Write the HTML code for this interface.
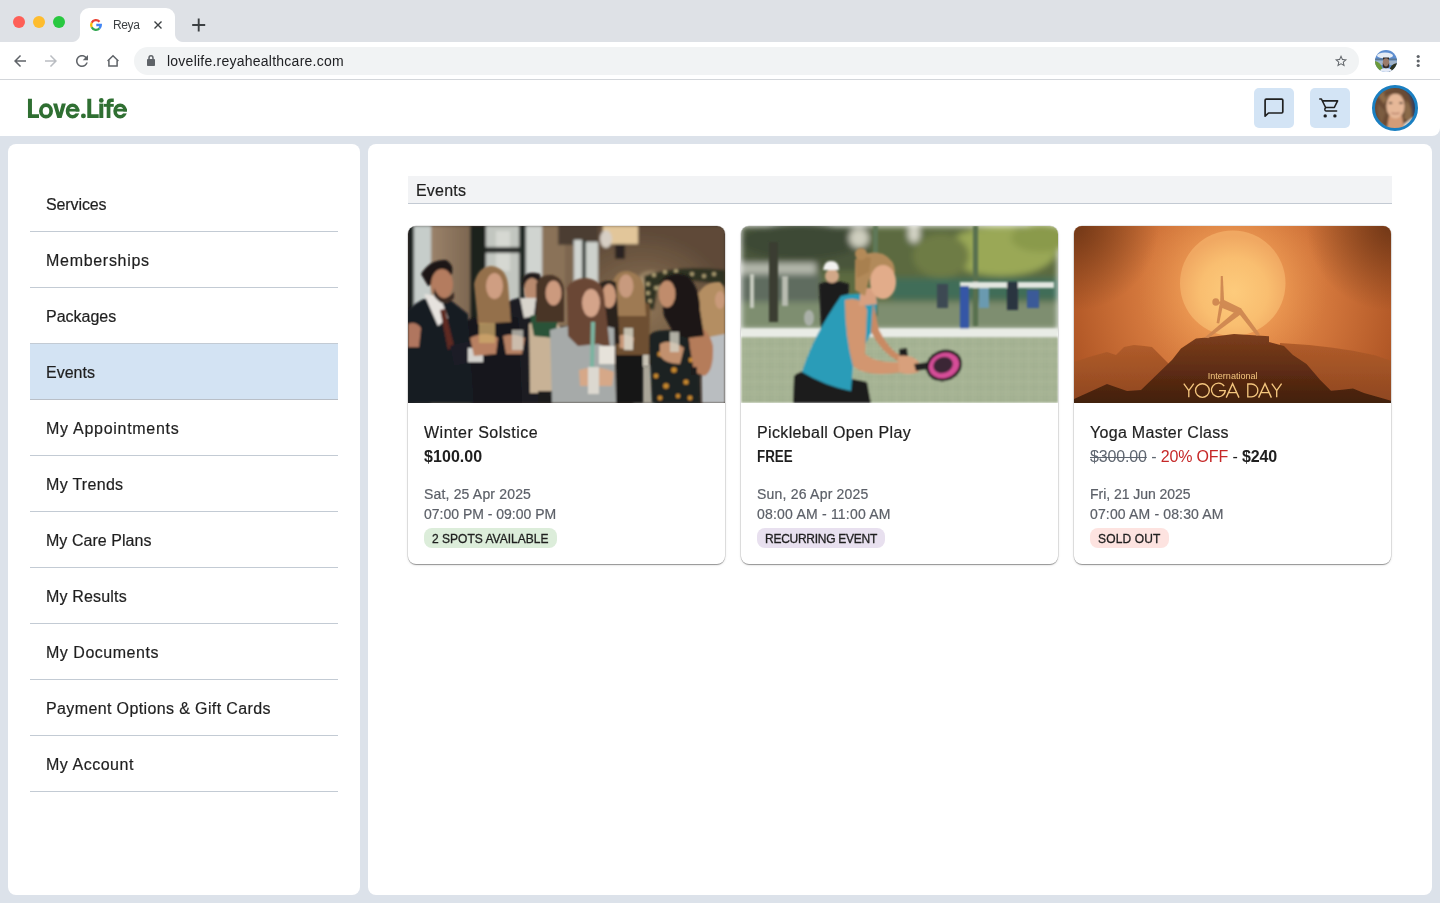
<!DOCTYPE html>
<html><head><meta charset="utf-8"><title>Reya</title>
<style>
*{box-sizing:border-box;margin:0;padding:0}
html,body{width:1440px;height:903px;overflow:hidden}
body{position:relative;background:#dce2ea;font-family:"Liberation Sans",sans-serif;color:#1f1f1f}
.abs{position:absolute}
.abs,.item,.card{will-change:transform}
.item,#evhead,.ttl,.date{-webkit-text-stroke:0.2px currentColor}
#logo{left:27.5px;top:92px;font-size:27.5px;font-weight:bold;color:#2e7031;letter-spacing:-2.6px;line-height:34px;white-space:nowrap}
/* chrome */
#tabstrip{left:0;top:0;width:1440px;height:42px;background:#dee1e6}
.dot{position:absolute;width:12px;height:12px;border-radius:50%;top:15.5px}
#tab{left:80px;top:8px;width:95px;height:34px;background:#fff;border-radius:9px 9px 0 0}
#tab:before,#tab:after{content:"";position:absolute;bottom:0;width:8px;height:8px;background:radial-gradient(circle at 0 0,transparent 8px,#fff 8.5px)}
#tab:before{left:-8px;background:radial-gradient(circle at 0 0,#dee1e6 7.5px,#fff 8.5px)}
#tab:after{right:-8px;background:radial-gradient(circle at 100% 0,#dee1e6 7.5px,#fff 8.5px)}
#toolbar{left:0;top:42px;width:1440px;height:38px;background:#fff;border-bottom:1px solid #d3d6da}
#omni{left:134px;top:5px;width:1225px;height:28px;border-radius:14px;background:#f1f3f4}
#url{left:167px;top:51px;font-size:14px;color:#202124;line-height:20px}
#tabtitle{left:113px;top:17px;font-size:12px;line-height:16px;color:#3c4043;letter-spacing:-0.4px}
/* app header */
#header{left:0;top:80px;width:1440px;height:56px;background:#fff;border-bottom-right-radius:8px}
.hbtn{position:absolute;top:88px;width:40px;height:40px;border-radius:5px;background:#d3e4f5}
#avatar{left:1372px;top:85px;width:46px;height:46px;border-radius:50%;border:3px solid #1a7dc0;overflow:hidden;background:#6b4a30}
/* sidebar */
#side{left:8px;top:144px;width:352px;height:751px;background:#fff;border-radius:8px}
.item{position:absolute;left:30px;width:308px;height:56px;border-bottom:1px solid #c3cbd4;font-size:16px;color:#1f1f1f;padding-left:16px;padding-top:1px;line-height:55px}
.item.sel{background:#d3e3f3;border-bottom-color:#b9bfc7}
/* main */
#main{left:368px;top:144px;width:1064px;height:751px;background:#fff;border-radius:8px}
#evhead{left:408px;top:176px;width:984px;height:28px;background:#f2f3f5;border-bottom:1px solid #c3cad3;font-size:16px;line-height:29px;padding-left:8px;color:#1f1f1f}
.card{position:absolute;top:226px;width:317px;height:338px;background:#fff;border-radius:8px;overflow:hidden;box-shadow:0 0 0 0.6px rgba(0,0,0,.16),0 2px 1px -1px rgba(0,0,0,.2),0 1px 1px 0 rgba(0,0,0,.14),0 1px 3px 0 rgba(0,0,0,.12)}
.img{position:absolute;left:0;top:0;width:317px;height:177px;overflow:hidden}
.ttl{position:absolute;left:16px;top:195px;font-size:16px;line-height:24px;color:#1f1f1f}
.price{position:absolute;left:16px;top:219px;font-size:16px;line-height:24px;font-weight:bold;color:#1f1f1f}
.date{position:absolute;left:16px;top:258px;font-size:14px;line-height:20px;color:#5c6068}
.chip{position:absolute;left:16px;top:302px;height:20px;border-radius:8px;font-size:12px;line-height:22px;padding:0 8px;color:#1f1f1f;-webkit-text-stroke:0.3px #1f1f1f}
</style><style id="lsfit">#urlt{letter-spacing:0.238px}#si0{letter-spacing:-0.114px}#si1{letter-spacing:0.700px}#si2{letter-spacing:0.000px}#si3{letter-spacing:0.000px}#si4{letter-spacing:0.714px}#si5{letter-spacing:0.300px}#si6{letter-spacing:0.042px}#si7{letter-spacing:0.167px}#si8{letter-spacing:0.518px}#si9{letter-spacing:0.378px}#si10{letter-spacing:0.522px}#evh{letter-spacing:0.200px}#t1{letter-spacing:0.500px}#p1{letter-spacing:0.067px}#d1{letter-spacing:0.173px}#h1{letter-spacing:-0.006px}#c1{letter-spacing:0.016px}#t2{letter-spacing:0.363px}#p2{display:inline-block;transform:scaleX(0.835);transform-origin:0 0}#d2{letter-spacing:0.213px}#h2{letter-spacing:0.211px}#c2{letter-spacing:-0.264px}#t3{letter-spacing:0.300px}#p3{letter-spacing:-0.143px}#d3{letter-spacing:-0.040px}#h3{letter-spacing:0.150px}#c3{letter-spacing:0.157px}</style></head>
<body>
<div id="tabstrip" class="abs">
  <div class="dot" style="left:13px;background:#fe5f57"></div>
  <div class="dot" style="left:33px;background:#febc2e"></div>
  <div class="dot" style="left:53px;background:#28c840"></div>
</div>
<div id="tab" class="abs"></div>
<div id="toolbar" class="abs"><div id="omni" class="abs"></div></div>
<div id="url" class="abs"><span id="urlt">lovelife.reyahealthcare.com</span></div>
<div id="tabtitle" class="abs">Reya</div>
<svg class="abs" style="left:0;top:0" width="1440" height="80" viewBox="0 0 1440 80">
  <!-- google G -->
  <g transform="translate(96,25)" fill="none" stroke-width="2.3">
    <path d="M3.5,-3.3 A4.8,4.8 0 0 0 -4.3,-2.2" stroke="#ea4335"/>
    <path d="M-4.3,-2.2 A4.8,4.8 0 0 0 -4.3,2.2" stroke="#fbbc05"/>
    <path d="M-4.3,2.2 A4.8,4.8 0 0 0 3.5,3.3" stroke="#34a853"/>
    <path d="M3.5,3.3 A4.8,4.8 0 0 0 4.8,0 H0.3" stroke="#4285f4"/>
  </g>
  <!-- tab close -->
  <path d="M154.5,21.5 L161.5,28.5 M161.5,21.5 L154.5,28.5" stroke="#3c4043" stroke-width="1.4"/>
  <!-- new tab + -->
  <path d="M198.7,18.5 V31.5 M192.2,25 H205.2" stroke="#3c4043" stroke-width="1.9"/>
  <!-- back -->
  <g transform="translate(11,52) scale(0.75)"><path fill="#5f6368" d="M20 11H7.83l5.59-5.59L12 4l-8 8 8 8 1.41-1.41L7.83 13H20v-2z"/></g>
  <g transform="translate(42,52) scale(0.75)"><path fill="#babdc2" d="M12 4l-1.41 1.41L16.17 11H4v2h12.17l-5.58 5.59L12 20l8-8z"/></g>
  <g transform="translate(73,52) scale(0.75)"><path fill="#5f6368" d="M17.65 6.35C16.2 4.9 14.21 4 12 4c-4.42 0-7.99 3.58-7.99 8s3.57 8 7.99 8c3.73 0 6.84-2.55 7.730-6h-2.08c-.82 2.33-3.04 4-5.65 4-3.310 0-6-2.69-6-6s2.69-6 6-6c1.66 0 3.14.69 4.22 1.78L13 11h7V4l-2.35 2.35z"/></g>
  <path d="M107.6,61 L113,55.8 L118.4,61 M108.9,59.8 V66.1 H117.1 V59.8" fill="none" stroke="#5f6368" stroke-width="1.5" stroke-linejoin="miter"/>
  <!-- lock -->
  <rect x="147" y="59" width="8" height="7" rx="0.8" fill="#5f6368"/>
  <path d="M149,59.5 V58 A2,2.2 0 0 1 153,58 V59.5" fill="none" stroke="#5f6368" stroke-width="1.5"/>
  <!-- star -->
  <g transform="translate(1333.7,53.8) scale(0.61)"><path fill="#5f6368" d="M22 9.24l-7.19-.62L12 2 9.19 8.63 2 9.24l5.46 4.73L5.82 21 12 17.27 18.18 21l-1.63-7.03L22 9.24zM12 15.4l-3.76 2.27 1-4.28-3.32-2.88 4.38-.38L12 6.1l1.71 4.04 4.38.38-3.32 2.88 1 4.28L12 15.4z"/></g>
  <!-- profile -->
  <defs><clipPath id="pc"><circle cx="1386" cy="61" r="11"/></clipPath></defs>
  <g clip-path="url(#pc)">
    <rect x="1375" y="50" width="22" height="22" fill="#5e8ed0"/>
    <ellipse cx="1385" cy="55.5" rx="8" ry="3" fill="#e6ecf4"/>
    <rect x="1375" y="58.5" width="22" height="2" fill="#5a7896"/>
    <rect x="1375" y="60.5" width="22" height="4.5" fill="#9fb4cc"/>
    <path d="M1375,61 Q1381,62 1383,70 L1375,72 Z" fill="#6c9a3a"/>
    <path d="M1397,63 Q1390,64 1389,72 L1397,72 Z" fill="#2e3422"/>
    <rect x="1383" y="57.5" width="6" height="2.2" fill="#2a2420"/>
    <ellipse cx="1386" cy="62.5" rx="3.2" ry="4.2" fill="#9a7a6a"/>
    <path d="M1382.8,63 Q1386,70 1389.2,63 L1389.2,67 Q1386,70 1382.8,67 Z" fill="#3a2e28"/>
    <path d="M1379,72 Q1381,67.5 1386,68.5 Q1391,67.5 1393,72 Z" fill="#e4eaf6"/>
  </g>
  <!-- menu -->
  <circle cx="1418.2" cy="56.5" r="1.6" fill="#5f6368"/>
  <circle cx="1418.2" cy="61" r="1.6" fill="#5f6368"/>
  <circle cx="1418.2" cy="65.5" r="1.6" fill="#5f6368"/>
</svg>

<div id="header" class="abs"></div>
<svg class="abs" style="left:0;top:80px" width="160" height="56" viewBox="0 80 160 56"><g fill="#2f6f32">
<path d="M27.96,98.8 H31.95 V114.2 H39 V118 H27.96 Z"/>
<ellipse cx="46" cy="110.95" rx="5.15" ry="5.75" fill="none" stroke="#2f6f32" stroke-width="3.7"/>
<path d="M53,103.6 H57.1 L59.45,112.6 L61.8,103.6 H65.9 L61.6,118 H57.3 Z"/>
<g id="lge"><ellipse cx="72.55" cy="110.95" rx="5.05" ry="5.75" fill="none" stroke="#2f6f32" stroke-width="3.6"/>
<rect x="74.6" y="111.5" width="6" height="1.9" fill="#fff"/>
<rect x="67.5" y="108.8" width="11.9" height="2.7"/></g>
<circle cx="83.4" cy="115.9" r="2.45"/>
<path d="M87.3,98.8 H91.25 V114.2 H98.75 V118 H87.3 Z"/>
<rect x="99.3" y="103.6" width="4" height="14.4"/>
<circle cx="101.3" cy="100.4" r="2.35"/>
<path d="M106.7,118 V102.6 Q106.7,98.6 111.2,98.6 H113.75 V101.9 H111.8 Q110.4,101.9 110.4,103.3 V118 Z"/>
<rect x="103.75" y="103.9" width="10" height="2.9"/>
<use href="#lge" transform="translate(47.6 0)"/>
</g></svg>
<div class="hbtn" style="left:1254px"></div>
<div class="hbtn" style="left:1310px"></div>
<svg class="abs" style="left:1240px;top:80px" width="200" height="56" viewBox="1240 80 200 56">
  <path d="M1265.1,116.2 V100.3 Q1265.1,99.1 1266.3,99.1 H1281.6 Q1282.8,99.1 1282.8,100.3 V111.8 Q1282.8,113 1281.6,113 H1268.5 Z" fill="none" stroke="#1f1f1f" stroke-width="1.7" stroke-linejoin="round"/>
  <path d="M1319.8,99 H1321.4 L1325.6,107.5 Q1324.2,109.5 1325.0,110.3 Q1325.4,111 1326.4,111 H1336.6" fill="none" stroke="#1f1f1f" stroke-width="1.6" stroke-linecap="round" stroke-linejoin="round"/>
  <path d="M1322.4,100.9 H1337.6 L1334.3,107.5 H1325.6" fill="none" stroke="#1f1f1f" stroke-width="1.6" stroke-linejoin="round"/>
  <circle cx="1325.2" cy="115.9" r="1.7" fill="#1f1f1f"/>
  <circle cx="1334.9" cy="115.9" r="1.7" fill="#1f1f1f"/>
</svg>
<svg class="abs" style="left:1370px;top:83px" width="50" height="50" viewBox="1370 83 50 50">
<defs><clipPath id="avc"><circle cx="1395" cy="108" r="21"/></clipPath><filter id="avb"><feGaussianBlur stdDeviation="0.9"/></filter></defs>
<g clip-path="url(#avc)"><g filter="url(#avb)">
<rect x="1370" y="83" width="50" height="50" fill="#4e3c2e"/>
<path d="M1402,86 Q1420,88 1418,122 L1406,120 L1404,96 Z" fill="#34405a"/>
<path d="M1373,112 Q1372,89 1393,87 Q1411,88 1412,106 L1414,124 L1376,128 Z" fill="#6a4c34"/>
<path d="M1378,96 Q1386,86 1400,88 Q1390,92 1384,104 Z" fill="#8e6c4a"/>
<path d="M1406,100 Q1414,108 1410,122 L1404,118 Z" fill="#8a6a4a"/>
<path d="M1378,104 Q1376,116 1382,124 L1386,112 Z" fill="#7c5c40"/>
<path d="M1374,118 Q1380,124 1388,130 L1386,134 L1372,134 Z" fill="#ebe6e0"/>
<path d="M1404,124 Q1410,120 1413,117 L1416,134 L1402,134 Z" fill="#e4ddd6"/>
<path d="M1389,116 L1402,116 L1405,134 L1386,134 Z" fill="#d49c78"/>
<ellipse cx="1395.5" cy="106" rx="9.2" ry="12.5" fill="#e6b898"/>
<path d="M1385,98 Q1392,90 1405,96 L1406,90 Q1394,85 1384,92 Z" fill="#6a4c34"/>
<ellipse cx="1390.6" cy="103" rx="1.8" ry="0.9" fill="#4a3a32"/>
<ellipse cx="1401" cy="103" rx="1.8" ry="0.9" fill="#4a3a32"/>
<path d="M1391.5,113 Q1395.5,114.5 1399.5,113" stroke="#a86a5a" stroke-width="1.2" fill="none"/>
</g></g>
<circle cx="1395" cy="108" r="21.5" fill="none" stroke="#1a7fc1" stroke-width="3"/>
</svg>

<div id="side" class="abs"></div>
<div class="item" style="top:176px"><span id="si0">Services</span></div>
<div class="item" style="top:232px"><span id="si1">Memberships</span></div>
<div class="item" style="top:288px"><span id="si2">Packages</span></div>
<div class="item sel" style="top:344px"><span id="si3">Events</span></div>
<div class="item" style="top:400px"><span id="si4">My Appointments</span></div>
<div class="item" style="top:456px"><span id="si5">My Trends</span></div>
<div class="item" style="top:512px"><span id="si6">My Care Plans</span></div>
<div class="item" style="top:568px"><span id="si7">My Results</span></div>
<div class="item" style="top:624px"><span id="si8">My Documents</span></div>
<div class="item" style="top:680px"><span id="si9">Payment Options &amp; Gift Cards</span></div>
<div class="item" style="top:736px"><span id="si10">My Account</span></div>

<div id="main" class="abs"></div>
<div id="evhead" class="abs"><span id="evh">Events</span></div>

<div class="card" style="left:408px">
  <div class="img"><!--IMG1-->
<svg width="317" height="177" viewBox="0 0 317 177" style="position:absolute;left:0;top:0">
<defs>
<filter id="bl1" x="-5%" y="-5%" width="110%" height="110%"><feGaussianBlur stdDeviation="0.8"/></filter><filter id="bl2" x="-5%" y="-5%" width="110%" height="110%"><feGaussianBlur stdDeviation="1.6"/></filter>
<radialGradient id="glow1" cx="0.5" cy="0.5" r="0.5"><stop offset="0" stop-color="#f6e2b0" stop-opacity="1"/><stop offset="1" stop-color="#f3dcae" stop-opacity="0"/></radialGradient>
<radialGradient id="wallg" cx="0.35" cy="0.75" r="0.7"><stop offset="0" stop-color="#8e7456"/><stop offset="1" stop-color="#5e4a38"/></radialGradient>
<linearGradient id="pil" x1="0" y1="0" x2="1" y2="0"><stop offset="0" stop-color="#9a826a"/><stop offset="1" stop-color="#7c6650"/></linearGradient>
</defs>
<g filter="url(#bl2)">
<rect x="-5" y="-5" width="327" height="187" fill="#3a2e26"/>
<!-- left structures -->
<rect x="0" y="0" width="7" height="177" fill="#1d2422"/>
<rect x="6" y="0" width="17" height="130" fill="#c6cdca"/>
<rect x="23" y="0" width="40" height="177" fill="url(#pil)"/>
<rect x="62" y="0" width="16" height="120" fill="#1b201d"/>
<rect x="78" y="0" width="34" height="90" fill="#c2c6c0"/>
<rect x="88" y="5" width="14" height="40" fill="#d6d8d2"/>
<rect x="78" y="21" width="36" height="6" fill="#262c28"/>
<rect x="111" y="0" width="7" height="90" fill="#222a26"/>
<rect x="118" y="0" width="16" height="80" fill="#d0d4d0"/>
<rect x="134" y="0" width="32" height="100" fill="#8a7258"/>
<!-- ceiling beam & window2 -->
<rect x="150" y="0" width="44" height="19" fill="#4c3e32"/>
<rect x="157" y="19" width="9" height="45" fill="#7d6650"/>
<rect x="166" y="14" width="9" height="46" fill="#d0d4d0"/>
<rect x="174" y="14" width="4" height="46" fill="#27302a"/>
<rect x="178" y="16" width="12" height="44" fill="#cdd1cc"/>
<!-- right wall -->
<rect x="190" y="0" width="127" height="110" fill="url(#wallg)"/>
<rect x="195" y="0" width="35" height="18" fill="#e2c69a"/>
<ellipse cx="198" cy="13" rx="6" ry="9" fill="#d6cec4"/>
<rect x="207" y="18" width="10" height="15" fill="#2a2420"/>
<ellipse cx="243" cy="56" rx="16" ry="13" fill="url(#glow1)"/>
<path d="M236,50 Q270,38 317,44 L317,60 Q276,50 250,60 L246,84 L236,82 Z" fill="#2e3022"/>
<g fill="#f2dca0"><circle cx="240" cy="58" r="1.6"/><circle cx="246" cy="49" r="1.6"/><circle cx="257" cy="46" r="1.5"/><circle cx="268" cy="45" r="1.5"/><circle cx="284" cy="48" r="1.5"/><circle cx="296" cy="50" r="1.5"/><circle cx="306" cy="48" r="1.5"/><circle cx="240" cy="67" r="1.6"/><circle cx="242" cy="75" r="1.5"/><circle cx="248" cy="62" r="1.4"/></g>
<rect x="226" y="140" width="20" height="37" fill="#aaa598"/>
</g>
<g filter="url(#bl1)">
<!-- right gray sleeve person -->
<path d="M300,88 Q312,80 317,84 L317,177 L294,177 Q292,130 300,88 Z" fill="#b9bdc0"/>
<!-- blonde right -->
<path d="M289,70 Q296,55 312,56 Q317,60 317,70 L317,108 L296,112 Q288,95 289,70 Z" fill="#b48e62"/>
<ellipse cx="312" cy="74" rx="5" ry="9" fill="#c99a7a"/>
<!-- woman 8 -->
<path d="M241,110 Q244,104 262,104 L290,108 L292,177 L244,177 Z" fill="#1e2420"/>
<g fill="#c8882e"><circle cx="252" cy="128" r="2.6"/><circle cx="266" cy="144" r="2.8"/><circle cx="258" cy="160" r="2.8"/><circle cx="278" cy="156" r="2.6"/><circle cx="248" cy="150" r="2.4"/><circle cx="283" cy="134" r="2.4"/><circle cx="282" cy="172" r="2.4"/><circle cx="252" cy="172" r="2.4"/><circle cx="270" cy="170" r="2.2"/><circle cx="262" cy="118" r="2.2"/></g>
<path d="M279,96 Q300,98 305,120 Q306,146 296,150 L286,146 L282,122 Z" fill="#b57c5a"/>
<path d="M252,57 Q262,44 280,50 Q292,62 292,84 L296,110 L280,112 L266,108 L256,90 Z" fill="#1c1816"/>
<ellipse cx="259" cy="68" rx="8.5" ry="13.5" fill="#c08c6c"/>
<path d="M252,118 Q262,112 276,122 L272,138 Q258,138 252,130 Z" fill="#c2906e"/>
<rect x="232" y="106" width="9" height="34" fill="#e0dccc" opacity="0.85"/>
<rect x="262" y="106" width="9" height="20" fill="#d4d2c4" opacity="0.8"/>
<rect x="283" y="141" width="6" height="8" fill="#1a1a1a"/>
<!-- woman 7 -->
<rect x="208" y="127" width="27" height="50" fill="#151515"/>
<path d="M206,76 Q222,70 242,78 L241,129 L208,129 Z" fill="#6e5030"/>
<path d="M204,58 Q208,44 220,45 Q234,48 236,62 L238,90 L204,90 Z" fill="#9e7a52"/>
<ellipse cx="218" cy="60" rx="7.5" ry="11.5" fill="#c89a7e"/>
<path d="M210,110 Q218,106 226,112 L224,124 L212,122 Z" fill="#c89878"/>
<rect x="216" y="102" width="9" height="22" fill="#d8d8cc" opacity="0.8"/>
<!-- woman 6 -->
<path d="M189,60 Q196,52 208,56 L212,118 L188,118 Z" fill="#2c221e"/>
<ellipse cx="201" cy="70" rx="7" ry="12" fill="#cc9a7c"/>
<!-- man 3 -->
<path d="M100,76 Q112,68 130,74 L134,177 L98,177 Z" fill="#1a1d24"/>
<path d="M114,52 Q120,44 132,48 L134,60 L115,62 Z" fill="#221e1a"/>
<ellipse cx="124" cy="64" rx="8" ry="12" fill="#b88a6e"/>
<path d="M112,72 L128,72 L126,90 L116,92 Z" fill="#d8d4cc"/>
<!-- woman 4 -->
<path d="M121,98 Q132,90 146,96 L152,100 L150,167 L122,167 Z" fill="#c8b296"/>
<path d="M122,90 Q136,84 150,92 L147,112 L126,110 Z" fill="#2c5238"/>
<rect x="130" y="165" width="22" height="12" fill="#1a1a1a"/>
<path d="M128,58 Q132,48 144,49 Q156,52 156,66 L156,96 L128,96 Z" fill="#4a3428"/>
<ellipse cx="145.5" cy="67" rx="8" ry="12.5" fill="#cc9a7e"/>
<!-- woman 2 -->
<path d="M56,96 Q80,84 110,92 L114,177 L56,177 Z" fill="#16151a"/>
<path d="M66,58 Q70,40 84,40 Q98,42 100,58 L103,96 L70,98 Z" fill="#94704c"/>
<ellipse cx="86.5" cy="60" rx="8.5" ry="13" fill="#cf9e82"/>
<path d="M95,110 Q106,106 117,112 L114,128 L98,128 Z" fill="#b58064"/>
<rect x="104" y="104" width="11" height="20" fill="#d4d0c4" opacity="0.75"/>
<!-- man 1 -->
<path d="M0,84 Q18,66 40,72 L60,88 L66,177 L0,177 Z" fill="#171a22"/>
<path d="M16,68 L32,70 L40,92 L30,100 Z" fill="#e6e2de"/>
<path d="M32,84 L37,83 L46,120 L40,124 Z" fill="#5e2a22"/>
<path d="M42,120 Q62,112 76,118 L76,134 L46,140 Z" fill="#1a1c26"/>
<rect x="60" y="122" width="15" height="14" fill="#d4d2ce"/>
<path d="M62,112 Q78,104 90,112 L88,128 L66,130 Z" fill="#b88062"/>
<rect x="71" y="97" width="16" height="20" fill="#caa66a" opacity="0.8"/>
<path d="M13,48 Q22,33 38,34 Q46,38 44,48 L40,52 L20,60 Z" fill="#1e1916"/>
<ellipse cx="34" cy="58" rx="11" ry="15" fill="#b47c5e"/>
<path d="M26,62 Q34,80 46,66 L46,72 Q36,84 26,70 Z" fill="#3a2a22"/>
<path d="M0,98 Q8,95 13,102 L11,121 L0,121 Z" fill="#b0765e"/>
<!-- woman 5 center -->
<path d="M142,104 Q172,94 206,102 L208,177 L144,177 Z" fill="#a6aaa9"/>
<path d="M159,62 Q164,52 178,52 Q194,54 196,68 L202,122 L190,118 L170,120 L160,110 Z" fill="#6a4634"/>
<ellipse cx="183" cy="77" rx="9" ry="14" fill="#d4a48a"/>
<path d="M183,96 L187,96 L186,142 L182,142 Z" fill="#7ab4a0"/>
<rect x="191" y="120" width="16" height="18" fill="#e6e2da"/>
<path d="M171,144 Q188,138 206,146 L204,160 L172,160 Z" fill="#d6a888"/>
<rect x="180" y="141" width="11" height="27" fill="#dcd8d0"/>
</g>
</svg>
<!--/IMG1--></div>
  <div class="ttl"><span id="t1">Winter Solstice</span></div>
  <div class="price"><span id="p1">$100.00</span></div>
  <div class="date"><span id="d1">Sat, 25 Apr 2025</span><br><span id="h1">07:00 PM - 09:00 PM</span></div>
  <div class="chip" style="background:#dcedda"><span id="c1">2 SPOTS AVAILABLE</span></div>
</div>
<div class="card" style="left:741px">
  <div class="img"><!--IMG2-->
<svg width="317" height="177" viewBox="0 0 317 177" style="position:absolute;left:0;top:0">
<defs>
<filter id="pb1" x="-5%" y="-5%" width="110%" height="110%"><feGaussianBlur stdDeviation="0.8"/></filter>
<filter id="pb3" x="-10%" y="-10%" width="120%" height="120%"><feGaussianBlur stdDeviation="3"/></filter>
<pattern id="mesh" width="3.3" height="3.3" patternUnits="userSpaceOnUse"><rect width="3.3" height="3.3" fill="#8a9a78"/><path d="M0,0.6 H3.3 M0.6,0 V3.3" stroke="#b8c4a6" stroke-width="1.1"/></pattern>
</defs>
<g filter="url(#pb3)">
<rect x="0" y="0" width="317" height="100" fill="#5c6a40"/>
<rect x="0" y="0" width="130" height="45" fill="#48553a"/>
<ellipse cx="60" cy="15" rx="60" ry="18" fill="#3e4a34"/>
<ellipse cx="260" cy="25" rx="55" ry="25" fill="#9aa856"/>
<ellipse cx="200" cy="30" rx="28" ry="22" fill="#6e7c44"/>
<ellipse cx="300" cy="12" rx="30" ry="14" fill="#8a9a4c"/>
<ellipse cx="118" cy="12" rx="10" ry="10" fill="#cfcfbf"/>
<ellipse cx="173" cy="8" rx="6" ry="9" fill="#d6d6c8"/>
<rect x="0" y="37" width="75" height="11" fill="#b4b8ac"/>
<rect x="0" y="48" width="80" height="32" fill="#5e6c5e"/>
<rect x="150" y="52" width="167" height="22" fill="#3f6d58"/>
<rect x="0" y="76" width="317" height="28" fill="#7e8e70"/>
</g>
<g filter="url(#pb1)">
<rect x="28" y="16" width="9" height="80" fill="#3a3c30"/>
<rect x="9" y="48" width="4" height="34" fill="#c8ccc0"/>
<rect x="41" y="50" width="6" height="30" fill="#b8bcb0"/>
<rect x="132" y="0" width="5" height="90" fill="#5e7858"/>
<rect x="232" y="0" width="5" height="100" fill="#587050"/>
<rect x="219" y="56" width="94" height="6" fill="#e2e6e0"/>
<rect x="219" y="60" width="9" height="43" fill="#3456a6"/>
<rect x="196" y="58" width="11" height="24" fill="#3c4a52"/>
<rect x="266" y="56" width="11" height="28" fill="#2c3440"/>
<rect x="286" y="64" width="12" height="18" fill="#3a5a98"/>
<rect x="238" y="62" width="10" height="20" fill="#6a9ab0"/>
<!-- background player -->
<path d="M78,58 Q92,52 108,58 L106,102 L80,102 Z" fill="#1e1e1e"/>
<ellipse cx="91" cy="50" rx="7" ry="7" fill="#d2a888"/>
<path d="M82,44 Q83,35 90,35 Q98,35 98,44 Z" fill="#f2f2f0"/>
<ellipse cx="68" cy="92" rx="5" ry="8" fill="#aab0a8"/>
<!-- net -->
<rect x="0" y="111" width="317" height="66" fill="url(#mesh)"/>
<rect x="0" y="102.5" width="317" height="8.5" fill="#e9ece6"/>
<!-- main woman -->
<path d="M53,150 Q60,142 80,146 L126,156 L130,177 L52,177 Z" fill="#1b1b1b"/>
<path d="M100,70 Q122,64 136,74 L134,100 L112,141 L110,165 Q84,160 61,146 Q72,110 100,70 Z" fill="#2a9cb8"/>
<path d="M104,74 Q122,70 126,84 L124,128 Q136,138 160,136 L162,146 Q126,152 112,140 Q104,110 104,74 Z" fill="#d29670"/>
<path d="M132,76 L138,104 Q148,124 160,130 L158,136 Q140,126 130,106 Z" fill="#c98a64"/>
<path d="M120,62 L134,62 L136,78 L118,80 Z" fill="#d8a080"/>
<path d="M114,34 Q124,24 142,28 Q154,34 154,46 L150,50 Q136,40 128,54 L124,70 L114,64 Z" fill="#b28a5a"/>
<ellipse cx="142" cy="56" rx="13" ry="17" fill="#e2ac8a"/>
<path d="M114,34 Q120,28 130,32 L128,46 L116,52 Z" fill="#a88050"/>
<circle cx="120" cy="28" r="6" fill="#b48a58"/>
<path d="M158,123 L166,122 L167,133 L159,134 Z" fill="#1e1e1e"/>
<path d="M157,130 Q170,128 178,136 L178,146 Q166,150 158,146 Z" fill="#d8a07c"/>
<path d="M173,138 L187,136 L188,143 L175,145 Z" fill="#222"/>
<ellipse cx="203" cy="139.5" rx="18.5" ry="15.5" transform="rotate(-20 203 139.5)" fill="#1c1a1c"/>
<ellipse cx="203" cy="139.5" rx="15.5" ry="12.5" transform="rotate(-20 203 139.5)" fill="#d64e98"/>
<ellipse cx="202" cy="139" rx="10" ry="8" transform="rotate(-20 202 139)" fill="#3a2636"/>
</g>
</svg>
<!--/IMG2--></div>
  <div class="ttl"><span id="t2">Pickleball Open Play</span></div>
  <div class="price"><span id="p2">FREE</span></div>
  <div class="date"><span id="d2">Sun, 26 Apr 2025</span><br><span id="h2">08:00 AM - 11:00 AM</span></div>
  <div class="chip" style="background:#e8e0ef"><span id="c2">RECURRING EVENT</span></div>
</div>
<div class="card" style="left:1074px">
  <div class="img"><!--IMG3-->
<svg width="317" height="177" viewBox="0 0 317 177" style="position:absolute;left:0;top:0">
<defs>
<radialGradient id="ybg" gradientUnits="userSpaceOnUse" cx="159" cy="70" r="200"><stop offset="0" stop-color="#f2a45a"/><stop offset="0.25" stop-color="#e28a48"/><stop offset="0.5" stop-color="#d0743a"/><stop offset="0.8" stop-color="#b45a28"/><stop offset="1" stop-color="#9a4a20"/></radialGradient>
<radialGradient id="sun" gradientUnits="userSpaceOnUse" cx="160" cy="66" r="56"><stop offset="0" stop-color="#fdcb7c"/><stop offset="0.6" stop-color="#f9be70"/><stop offset="1" stop-color="#f0a862"/></radialGradient>
<radialGradient id="sunglow" gradientUnits="userSpaceOnUse" cx="159" cy="60" r="95"><stop offset="0.5" stop-color="#f0a058" stop-opacity="0.55"/><stop offset="1" stop-color="#e08848" stop-opacity="0"/></radialGradient>
<linearGradient id="mtn" x1="0" y1="0" x2="0" y2="1"><stop offset="0" stop-color="#7c3e1c"/><stop offset="0.6" stop-color="#5a2a12"/><stop offset="1" stop-color="#42200c"/></linearGradient>
<linearGradient id="hill" x1="0" y1="0" x2="0" y2="1"><stop offset="0" stop-color="#b05c2a"/><stop offset="1" stop-color="#8e4620"/></linearGradient>
<radialGradient id="vtl" gradientUnits="userSpaceOnUse" cx="0" cy="0" r="85"><stop offset="0" stop-color="#5e2e12" stop-opacity="0.75"/><stop offset="1" stop-color="#5e2e12" stop-opacity="0"/></radialGradient>
<radialGradient id="vtr" gradientUnits="userSpaceOnUse" cx="317" cy="0" r="85"><stop offset="0" stop-color="#5e2e12" stop-opacity="0.75"/><stop offset="1" stop-color="#5e2e12" stop-opacity="0"/></radialGradient>
<filter id="yb1"><feGaussianBlur stdDeviation="0.5"/></filter>
</defs>
<rect width="317" height="177" fill="url(#ybg)"/>
<rect width="317" height="177" fill="url(#vtl)"/><rect width="317" height="177" fill="url(#vtr)"/>
<circle cx="159" cy="60" r="95" fill="url(#sunglow)"/>
<circle cx="158.75" cy="57.25" r="52.75" fill="url(#sun)"/>
<g filter="url(#yb1)">
<path d="M0,136 L15,131 L33,126 L42,129 L50,121 L60,119 L70,120 L78,121 L94,137 L110,162 L0,177 Z" fill="url(#hill)"/>
<path d="M206,117 L235,119 L257,121.4 L279,124.8 L301,129.2 L317,134.8 L317,177 L206,177 Z" fill="url(#hill)"/>
<path d="M0,177 L0,173 L33,158 L53,165 L67,164 L98,134 L107,122.5 L122,112.5 L133,111.5 L160,108 L195,110.3 L195,116 L210,120 L219,129 L232.5,138 L246,153.7 L257,164.8 L268,163.7 L279,162.5 L290,167 L317,174.8 L317,177 Z" fill="url(#mtn)"/>
<g fill="#cc8450" opacity="0.9">
<path d="M146.8,50 L148.8,50 L150.2,77 L146.2,77 Z"/>
<path d="M144.5,76 L150,74 L167.5,82.5 L165.5,89 L147,81.5 Z"/>
<path d="M162,84 L167.5,83 L186,108.6 L182.6,109.8 Z"/>
<path d="M161,85.5 L166.5,88.5 L134.2,112.2 L130.8,111.4 Z"/>
<path d="M145.4,79 L148.8,80 L145.2,97.5 L142.6,97 Z"/>
<ellipse cx="141.8" cy="76" rx="3.5" ry="3.8"/>
</g>
</g>
<g fill="none" stroke="#f4c67e" stroke-width="1.35" stroke-linecap="butt" stroke-linejoin="miter">
<path d="M109.8,157.7 L114.8,164.6 L119.8,157.7 M114.8,164.6 V171.3"/>
<ellipse cx="128.4" cy="164.5" rx="6.9" ry="6.8"/>
<path d="M150.2,160.2 A6.9,6.8 0 1 0 151.3,164.6 H145"/>
<path d="M152.2,171.6 L158.6,157.6 L165,171.6 M154.6,166.6 H162.6"/>
<path d="M173.8,158 V170.9 H177.4 A6.45,6.45 0 0 0 177.4,158 Z"/>
<path d="M184.6,171.6 L191,157.6 L197.4,171.6 M187,166.6 H195"/>
<path d="M197.8,157.7 L202.7,164.6 L207.6,157.7 M202.7,164.6 V171.3"/>
</g>
<text x="133.8" y="153" font-family="Liberation Sans" font-size="9.6" fill="#f4c67e" textLength="49.7" lengthAdjust="spacingAndGlyphs">International</text>
</svg>
<!--/IMG3--></div>
  <div class="ttl"><span id="t3">Yoga Master Class</span></div>
  <div class="price" style="font-weight:normal"><span id="p3"><span style="color:#5f6670;text-decoration:line-through">$300.00</span><span style="color:#5f6670"> - </span><span style="color:#c62828">20% OFF</span> - <b>$240</b></span></div>
  <div class="date"><span id="d3">Fri, 21 Jun 2025</span><br><span id="h3">07:00 AM - 08:30 AM</span></div>
  <div class="chip" style="background:#fde3e0"><span id="c3">SOLD OUT</span></div>
</div>
</body></html>
